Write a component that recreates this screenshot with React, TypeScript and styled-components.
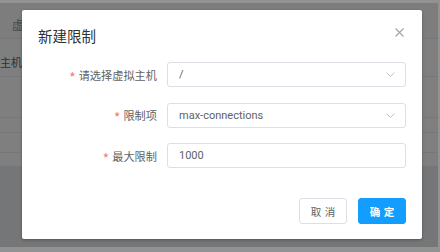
import React from 'react';
import styled, { createGlobalStyle } from 'styled-components';

const GlobalStyle = createGlobalStyle`
  * { box-sizing: border-box; }
  html, body { margin: 0; padding: 0; }
  body {
    font-family: Roboto, "Noto Sans CJK SC", sans-serif;
    background: #909090;
  }
`;

type Field = { label: string; value: string; select?: boolean };

const fields: Field[] = [
  { label: '请选择虚拟主机', value: '/', select: true },
  { label: '限制项', value: 'max-connections', select: true },
  { label: '最大限制', value: '1000' },
];

const Chevron = () => (
  <svg width="9" height="5" viewBox="0 0 9 5" fill="none">
    <path d="M0.5 0.5 L4.5 4.5 L8.5 0.5" stroke="#c0c4cc" strokeWidth="1" />
  </svg>
);

const CloseIcon = () => (
  <svg width="9" height="9" viewBox="0 0 9 9" fill="none">
    <path d="M0.5 0.5 L8.5 8.5 M8.5 0.5 L0.5 8.5" stroke="#a0a3a8" strokeWidth="1.1" />
  </svg>
);

const App = () => {
  return (
    <Screen>
      <GlobalStyle />
      <Viewport>
        <Page>
          <TableHead>
            <HeadCell>虚拟主机</HeadCell>
          </TableHead>
          <TableRow $h={38}>
            <Cell $offset={-22}>虚拟主机名</Cell>
          </TableRow>
          <TableRow $h={41} />
          <TableRow $h={15} />
          <TableRow $h={20} />
          <TableRow $h={13} $last />
        </Page>
        <Mask />
        <Dialog>
          <Header>
            <Title>新建限制</Title>
            <Close>
              <CloseIcon />
            </Close>
          </Header>
          <Form>
            {fields.map((f) => (
              <Row key={f.label}>
                <Label>
                  <Star>*</Star>
                  {f.label}
                </Label>
                <Input>
                  <span>{f.value}</span>
                  {f.select && <Chevron />}
                </Input>
              </Row>
            ))}
          </Form>
          <Footer>
            <Button>取消</Button>
            <Button $primary>确定</Button>
          </Footer>
        </Dialog>
      </Viewport>
    </Screen>
  );
};

export default App;

const Screen = styled.div`
  width: 440px;
  height: 252px;
  padding: 3px 2px 5px 0;
  background: #929292;
`;

const Viewport = styled.div`
  position: relative;
  height: 244px;
  overflow: hidden;
  background: #eaecee;
`;

const Page = styled.div`
  background: #fff;
  height: 163px;
`;

const TableHead = styled.div`
  height: 36px;
  display: flex;
  align-items: center;
  padding-top: 8px;
  background: #fafafa;
  border-bottom: 1px solid #ebeef5;
`;

const HeadCell = styled.div`
  padding-left: 12px;
  font-size: 12px;
  color: #909399;
`;

const TableRow = styled.div<{ $h: number; $last?: boolean }>`
  height: ${(p) => p.$h}px;
  display: flex;
  align-items: center;
  padding-top: 8px;
  border-bottom: ${(p) => (p.$last ? 'none' : '1px solid #ebeef5')};
`;

const Cell = styled.div<{ $offset: number }>`
  margin-left: ${(p) => p.$offset}px;
  font-size: 11px;
  color: #606266;
`;

const Mask = styled.div`
  position: absolute;
  inset: 0;
  background: rgba(0, 0, 0, 0.5);
`;

const Dialog = styled.div`
  position: absolute;
  left: 22px;
  top: 7px;
  width: 400px;
  height: 229px;
  background: #fff;
  border-radius: 2px;
  box-shadow: 0 1px 3px rgba(0, 0, 0, 0.3);
  display: flex;
  flex-direction: column;
`;

const Header = styled.div`
  position: relative;
  padding: 16px 16px 0 16px;
  height: 36px;
`;

const Title = styled.div`
  font-family: "Noto Sans CJK SC", sans-serif;
  font-size: 14.5px;
  line-height: 20px;
  color: #303133;
`;

const Close = styled.div`
  position: absolute;
  right: 18px;
  top: 18px;
  display: flex;
`;

const Form = styled.div`
  padding-top: 16px;
  display: flex;
  flex-direction: column;
  gap: 15.5px;
`;

const Row = styled.div`
  display: grid;
  grid-template-columns: 135px 239px;
  column-gap: 10px;
  align-items: center;
`;

const Label = styled.div`
  text-align: right;
  font-family: "Noto Sans CJK SC", sans-serif;
  font-size: 11.2px;
  color: #606266;
`;

const Star = styled.span`
  color: #f56c6c;
  margin-right: 4px;
  font-size: 11px;
  font-family: Roboto, sans-serif;
`;

const Input = styled.div`
  height: 25px;
  border: 1px solid #dcdfe6;
  border-radius: 3px;
  padding: 0 10px 0 11px;
  display: flex;
  align-items: center;
  justify-content: space-between;
  font-size: 11px;
  color: #606266;
`;

const Footer = styled.div`
  margin-top: auto;
  padding: 0 16px 15px;
  display: flex;
  justify-content: flex-end;
  gap: 11px;
`;

const Button = styled.button<{ $primary?: boolean }>`
  width: 48px;
  height: 26px;
  padding: 0;
  border-radius: 3px;
  font-family: "Noto Sans CJK SC", sans-serif;
  font-size: 10.5px;
  letter-spacing: 0.34em;
  text-indent: 0.34em;
  cursor: pointer;
  border: 1px solid ${(p) => (p.$primary ? '#139dff' : '#dcdfe6')};
  background: ${(p) => (p.$primary ? '#139dff' : '#fff')};
  color: ${(p) => (p.$primary ? '#fff' : '#606266')};
  font-weight: ${(p) => (p.$primary ? 700 : 400)};
`;
